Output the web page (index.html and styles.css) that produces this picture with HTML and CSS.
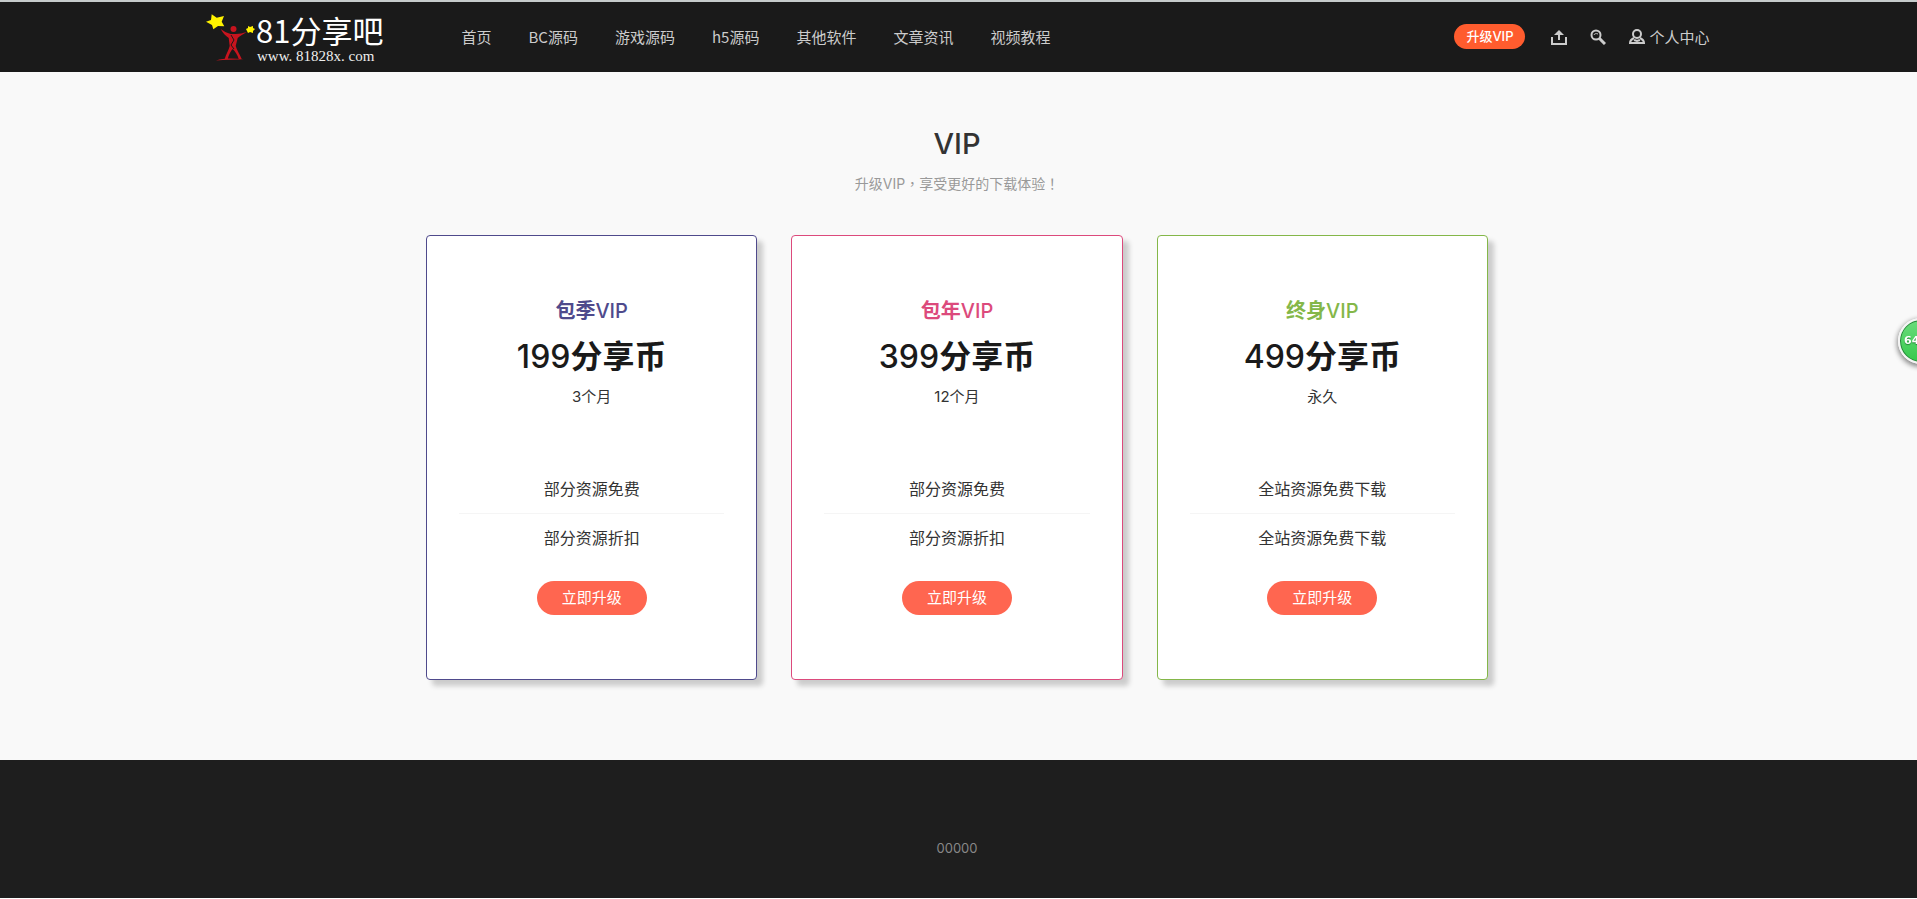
FILE: index.html
```
<!DOCTYPE html>
<html lang="zh-CN">

<head>
    <meta charset="UTF-8">
    <meta name="viewport" content="width=device-width, initial-scale=1.0">
    <title>VIP - 81分享吧</title>
    <link rel="stylesheet" href="styles.css">
</head>

<body>
    <header class="header">
        <div class="header-inner">
            <a href="#" class="logo">
                <svg width="180" height="56" viewBox="0 0 180 56">
                    <path fill="#fff200" d="M6.700 5.300l5 3.400 7.300-1.700-2.300 5.700 2.600 4.600-6.300-.3-4.700 3.300-1.300-4.300-6-3.300 5-1.700z" />
                    <path fill="#fff200" d="M43 17l2 1 3-1v2l2 1-2 2v2l-3-1-2 1-1-2-1-2 2-1z" />
                    <g fill="#c8141e">
                        <circle cx="28.500" cy="20" r="3" />
                        <path d="M15.700 20c3 2 6 4 10 5h5c4 0 7-1 11-2-3 2-7 4-9 6l-2 8c1 4 4 8 6 13h-3c-1-4-4-8-6-10-2 2-4 6-5 10h-3c1-4 4-9 5-13l-1-8c-3-2-6-5-8-9z" />
                        <path d="M11 51.500c9-3 19-2 28-1-9 0-19 0-28 1z" />
                    </g>
                    <path d="M26 26l3 5-3 5 3 4" fill="none" stroke="#1a1a1a" />
                    <text class="logo-name" x="51" y="34">81分享吧</text>
                    <text class="logo-url" x="52" y="52">www. 81828x. com</text>
                </svg>
            </a>
            <nav class="nav">
                <a href="#">首页</a>
                <a href="#">BC源码</a>
                <a href="#">游戏源码</a>
                <a href="#">h5源码</a>
                <a href="#">其他软件</a>
                <a href="#">文章资讯</a>
                <a href="#">视频教程</a>
            </nav>
            <div class="tools">
                <a href="#" class="btn-vip">升级VIP</a>
                <a href="#" class="tool" aria-label="上传">
                    <svg width="16" height="16" viewBox="0 0 16 16" fill="none" stroke="currentColor" stroke-width="2">
                        <path d="M1 8v7h14V8M8 11V3" />
                        <path d="M3 6l5-5 5 5z" fill="currentColor" stroke="none" />
                    </svg>
                </a>
                <a href="#" class="tool" aria-label="搜索">
                    <svg width="16" height="16" viewBox="0 0 16 16" fill="none" stroke="currentColor" stroke-width="2">
                        <circle cx="6" cy="6" r="4.500" />
                        <path d="M9 9l6 6" stroke-width="3" />
                        <path d="M4 6c0-1 2-2 4-1" stroke-width="1" />
                    </svg>
                </a>
                <a href="#" class="tool">
                    <svg width="16" height="16" viewBox="0 0 16 16" fill="none" stroke="currentColor" stroke-width="2">
                        <circle cx="8" cy="5" r="4" />
                        <path d="M5 9c-2 1-4 2-4 5h14c0-3-2-4-4-5M5 11l3 1 3-1" />
                    </svg>
                    <span>个人中心</span>
                </a>
            </div>
        </div>
    </header>

    <main class="main">
        <h1>VIP</h1>
        <p class="desc" lang="zh-TW">升级VIP，享受更好的下载体验！</p>
        <div class="plans">
            <section class="plan plan-season">
                <h2>包季<span>VIP</span></h2>
                <div class="price"><span>199</span>分享币</div>
                <p class="term">3个月</p>
                <ul>
                    <li>部分资源免费</li>
                    <li>部分资源折扣</li>
                </ul>
                <button class="btn-buy">立即升级</button>
            </section>
            <section class="plan plan-year">
                <h2>包年<span>VIP</span></h2>
                <div class="price"><span>399</span>分享币</div>
                <p class="term">12个月</p>
                <ul>
                    <li>部分资源免费</li>
                    <li>部分资源折扣</li>
                </ul>
                <button class="btn-buy">立即升级</button>
            </section>
            <section class="plan plan-life">
                <h2>终身<span>VIP</span></h2>
                <div class="price"><span>499</span>分享币</div>
                <p class="term">永久</p>
                <ul>
                    <li>全站资源免费下载</li>
                    <li>全站资源免费下载</li>
                </ul>
                <button class="btn-buy">立即升级</button>
            </section>
        </div>
    </main>

    <footer class="footer">
        <p>00000</p>
    </footer>

    <div class="ball">64</div>
</body>

</html>
```
FILE: styles.css
```
* {
    box-sizing: border-box;
}

body {
    margin: 0;
    font-family: Inter, "Noto Sans CJK SC", sans-serif;
    font-size: 15px;
    color: #333;
    background: #fff;
    overflow-x: hidden;
}

h1, h2, p, ul {
    margin: 0;
    padding: 0;
    font-weight: 400;
}

ul {
    list-style: none;
}

a {
    color: inherit;
    text-decoration: none;
}

/* header */
.header {
    background: #1a1a1a;
    border-top: 2px solid #c5cbcb;
    padding: 0 3px 0 0;
    color: #ccc;
    font-family: "Noto Sans CJK SC", sans-serif;
}

.header-inner {
    max-width: 1505px;
    height: 70px;
    margin: 0 auto;
    padding-bottom: 1px;
    display: flex;
    align-items: center;
}

.logo {
    display: flex;
}

.logo svg {
    overflow: visible;
}

.logo-name {
    font-size: 31px;
    fill: #fff;
}

.logo-url {
    font-family: "Liberation Serif", serif;
    font-size: 15px;
    fill: #eee;
}

.nav {
    display: flex;
    gap: 37px;
    margin-left: 77px;
}

.tools {
    display: flex;
    align-items: center;
    gap: 23px;
    margin-left: auto;
}

.btn-vip {
    background: #ff5c2e;
    color: #fff;
    font-family: Inter, "Noto Sans CJK SC", sans-serif;
    font-size: 13px;
    font-weight: 500;
    line-height: 25px;
    padding: 0 12px;
    margin-right: 3px;
    border-radius: 13px;
}

.tool {
    display: flex;
    align-items: center;
    gap: 4px;
}

/* vip plans */
.main {
    background: #f9f9f9;
    padding: 51px 3px 80px 0;
    text-align: center;
}

.main h1 {
    font-size: 29px;
    font-weight: 500;
    line-height: 42px;
}

.desc {
    font-family: Inter, "Noto Sans CJK TC", sans-serif;
    font-size: 14px;
    line-height: 20px;
    margin-top: 9px;
    color: #999;
}

.plans {
    max-width: 1062px;
    margin: 41px auto 0;
    display: grid;
    grid-template-columns: repeat(3, 1fr);
    gap: 34px;
}

.plan {
    background: #fff;
    border: 1px solid;
    border-radius: 4px;
    box-shadow: 6px 6px 5px #ccc;
    padding: 60px 32px 64px;
}

.plan-season {
    color: #4f4a8c;
}

.plan-year {
    color: #dc4a7c;
}

.plan-life {
    color: #84b749;
}

.plan h2 {
    font-size: 20px;
    font-weight: 700;
    line-height: 30px;
}

.plan h2 span,
.price span {
    font-weight: 500;
}

.price {
    font-size: 32px;
    font-weight: 700;
    line-height: 48px;
    margin-top: 7px;
    color: #1a1a1a;
}

.term {
    line-height: 24px;
    margin-top: 4px;
    color: #333;
}

.plan ul {
    margin-top: 56px;
    color: #333;
    font-size: 16px;
    line-height: 24px;
}

.plan li {
    padding: 12px 0;
}

.plan li + li {
    border-top: 1px solid #f5f5f5;
}

.btn-buy {
    margin-top: 19px;
    padding: 0 25px;
    border: 0;
    border-radius: 17px;
    background: #ff6650;
    color: #fff;
    font: inherit;
    line-height: 34px;
    cursor: pointer;
}

/* footer */
.footer {
    background: #1e1e1e;
    padding: 78px 3px 40px 0;
    text-align: center;
    color: #888;
    font-size: 13px;
    line-height: 20px;
}

/* floating ball on the right edge */
.ball {
    position: fixed;
    right: -27px;
    top: 318px;
    width: 46px;
    height: 46px;
    padding-left: 4px;
    border: 2px solid #f4f4f4;
    border-radius: 50%;
    background: linear-gradient(#6bdc7c, #35c94c);
    box-shadow: 0 2px 5px 1px #888, inset 0 0 0 1px #27813a;
    color: #fff;
    font: bold 11px/42px "DejaVu Sans", sans-serif;
    text-shadow: 0 1px 1px #27813a;
}
```
